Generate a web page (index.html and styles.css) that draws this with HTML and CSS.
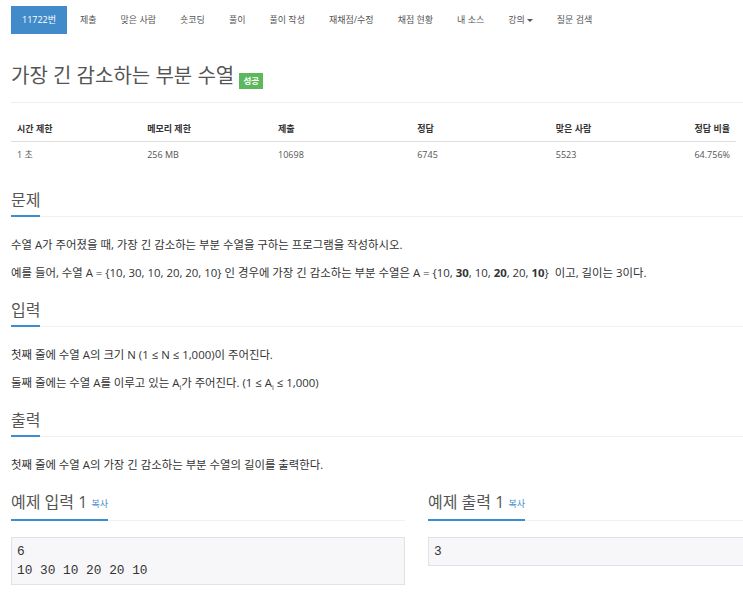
FILE: index.html
```html
<!DOCTYPE html>
<html lang="ko">
<head>
    <meta charset="UTF-8">
    <meta name="viewport" content="width=device-width, initial-scale=1.0">
    <title>11722번: 가장 긴 감소하는 부분 수열</title>
    <link rel="stylesheet" href="styles.css">
</head>
<body>
    <div class="page">
        <ul class="problem-menu">
            <li class="active"><a href="#">11722번</a></li>
            <li><a href="#">제출</a></li>
            <li><a href="#">맞은 사람</a></li>
            <li><a href="#">숏코딩</a></li>
            <li><a href="#">풀이</a></li>
            <li><a href="#">풀이 작성</a></li>
            <li><a href="#">재채점/수정</a></li>
            <li><a href="#">채점 현황</a></li>
            <li><a href="#">내 소스</a></li>
            <li><a href="#">강의<span class="caret"></span></a></li>
            <li><a href="#">질문 검색</a></li>
        </ul>

        <div class="page-header">
            <h1>가장 긴 감소하는 부분 수열 <span class="label-success">성공</span></h1>
        </div>

        <table class="problem-info">
            <thead>
                <tr>
                    <th class="c1">시간 제한</th>
                    <th class="c2">메모리 제한</th>
                    <th class="c3">제출</th>
                    <th class="c4">정답</th>
                    <th class="c5">맞은 사람</th>
                    <th class="c6">정답 비율</th>
                </tr>
            </thead>
            <tbody>
                <tr>
                    <td>1 초</td>
                    <td>256 MB</td>
                    <td>10698</td>
                    <td>6745</td>
                    <td>5523</td>
                    <td class="c6">64.756%</td>
                </tr>
            </tbody>
        </table>

        <section class="problem-section">
            <div class="headline"><h2>문제</h2></div>
            <p>수열 A가 주어졌을 때, 가장 긴 감소하는 부분 수열을 구하는 프로그램을 작성하시오.</p>
            <p>예를 들어, 수열 A = {10, 30, 10, 20, 20, 10} 인 경우에 가장 긴 감소하는 부분 수열은 A = {10, <b>30</b>, 10, <b>20</b>, 20, <b>10</b>}&nbsp; 이고, 길이는 3이다.</p>
        </section>

        <section class="problem-section">
            <div class="headline"><h2>입력</h2></div>
            <p>첫째 줄에 수열 A의 크기 N (1 ≤ N ≤ 1,000)이 주어진다.</p>
            <p>둘째 줄에는 수열 A를 이루고 있는 A<sub>i</sub>가 주어진다. (1 ≤ A<sub>i</sub> ≤ 1,000)</p>
        </section>

        <section class="problem-section">
            <div class="headline"><h2>출력</h2></div>
            <p>첫째 줄에 수열 A의 가장 긴 감소하는 부분 수열의 길이를 출력한다.</p>
        </section>

        <div class="samples">
            <section class="sample">
                <div class="headline"><h2>예제 입력 1 <a class="copy" href="#">복사</a></h2></div>
                <pre>6
10 30 10 20 20 10</pre>
            </section>
            <section class="sample">
                <div class="headline"><h2>예제 출력 1 <a class="copy" href="#">복사</a></h2></div>
                <pre>3</pre>
            </section>
        </div>
    </div>
</body>
</html>
```

FILE: styles.css
```css
body {
    font-family: "Open Sans", "Noto Sans CJK KR", sans-serif;
    font-size: 11px;
    color: #333;
    background: #fff;
    margin: 0;
    overflow: hidden;
}

a {
    text-decoration: none;
}

.page {
    padding-left: 11px;
    width: 800px;
}

/* top menu */
.problem-menu {
    list-style: none;
    margin: 0;
    padding: 6px 0 0 0;
    display: flex;
}

.problem-menu li {
    margin-right: 2px;
}

.problem-menu a {
    display: block;
    height: 28px;
    line-height: 28px;
    padding: 0 11px;
    font-size: 9px;
    color: #555;
}

.problem-menu li.active a {
    background: #428bca;
    color: #fff;
}

.caret {
    display: inline-block;
    width: 0;
    height: 0;
    margin-left: 2px;
    vertical-align: middle;
    border-top: 3px solid #555;
    border-left: 3px solid transparent;
    border-right: 3px solid transparent;
}

/* title */
.page-header {
    width: 732px;
    border-bottom: 1px solid #eee;
    padding: 27px 0 11px 0;
    margin-bottom: 14px;
}

.page-header h1 {
    margin: 0;
    font-size: 20px;
    font-weight: 400;
    line-height: 30px;
    color: #555;
}

.label-success {
    display: inline-block;
    background: #5cb85c;
    color: #fff;
    font-size: 8.5px;
    font-weight: 700;
    line-height: 16px;
    padding: 0 4px;
    vertical-align: -1px;
}

/* info table */
.problem-info {
    width: 725px;
    border-collapse: collapse;
    margin-bottom: 20px;
}

.problem-info th,
.problem-info td {
    text-align: left;
    padding: 5px 6px;
    line-height: 14px;
    font-size: 9px;
}

.problem-info th {
    font-weight: 700;
    border-bottom: 1px solid #ddd;
}

.problem-info td {
    padding-top: 6px;
    padding-bottom: 6px;
    color: #555;
}

.problem-info .c1,
.problem-info .c2 { width: 130px; }
.problem-info .c3,
.problem-info .c4,
.problem-info .c5 { width: 138px; }
.problem-info .c6 { text-align: right; }

/* sections */
.headline {
    border-bottom: 1px solid #f2f2f2;
    margin-bottom: 19px;
}

.headline h2 {
    display: inline-block;
    margin: 0 0 -1px 0;
    padding-bottom: 3px;
    font-size: 16px;
    font-weight: 400;
    line-height: 24px;
    color: #555;
    border-bottom: 2px solid #3c8dcf;
}

.problem-section {
    width: 732px;
    padding-bottom: 6px;
}

.problem-section p {
    margin: 0 0 10px 0;
    font-size: 11.4px;
    line-height: 18px;
    color: #333;
}

.problem-section p b {
    font-weight: 700;
}

sub {
    font-size: 7px;
    line-height: 0;
}

.copy {
    font-size: 9px;
    color: #428bca;
    vertical-align: 1px;
}

/* sample boxes */
.samples {
    display: grid;
    grid-template-columns: 394px 394px;
    column-gap: 23px;
    align-items: start;
}

.samples .headline {
    margin-bottom: 16px;
}

.samples pre {
    margin: 0;
    padding: 4px 5px;
    font-family: "Liberation Mono", "DejaVu Sans Mono", monospace;
    font-size: 12.8px;
    line-height: 19px;
    color: #333;
    background: #f7f7f9;
    border: 1px solid #e1e1e8;
}
```
